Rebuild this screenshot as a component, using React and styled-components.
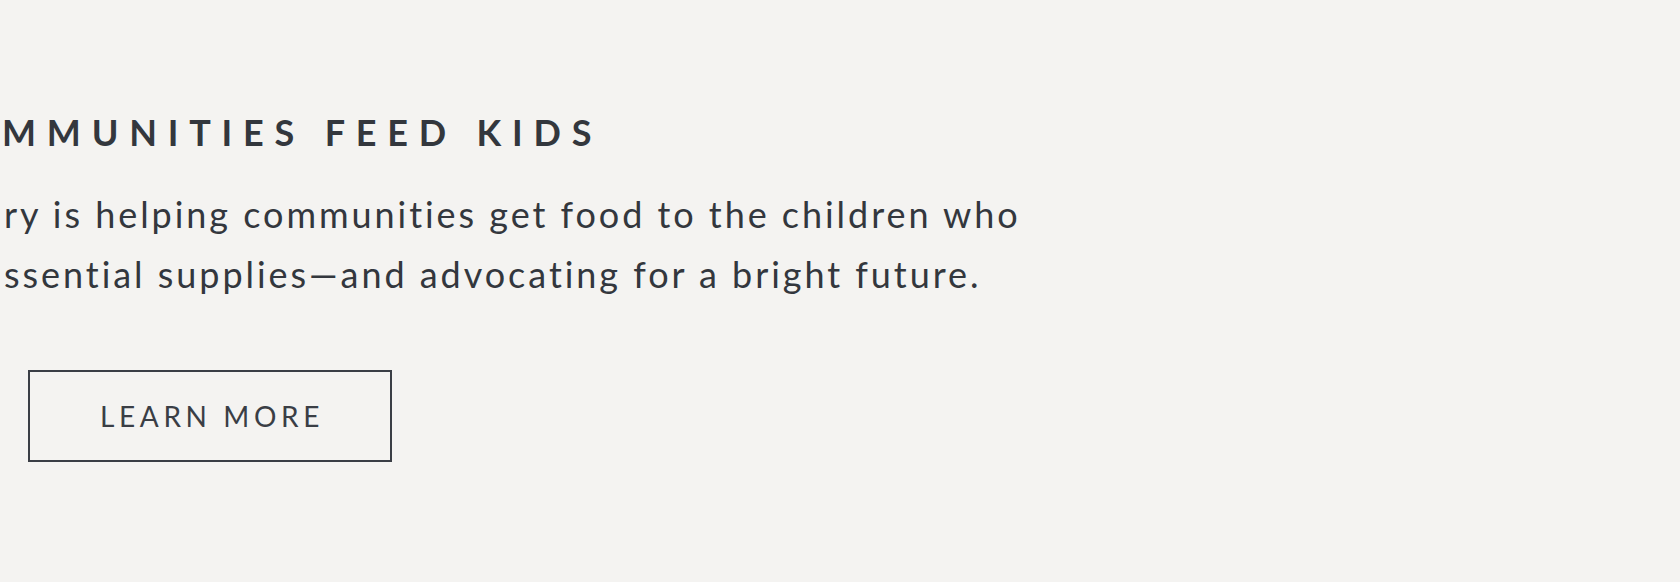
import React from 'react'
import styled, { createGlobalStyle } from 'styled-components'

const GlobalStyle = createGlobalStyle`
  html, body {
    margin: 0;
    padding: 0;
    background: #f4f3f1;
  }
  body {
    font-family: Lato, "Noto Sans", sans-serif;
    color: #33373d;
    overflow: hidden;
  }
`

const Section = styled.section`
  width: 1680px;
  height: 582px;
  overflow: hidden;
  padding-top: 110px;
  box-sizing: border-box;
`

const Column = styled.div`
  display: flex;
  flex-direction: column;
  align-items: flex-start;
  padding-left: 2px;
`

const Heading = styled.h2`
  margin: 0;
  font-size: 36px;
  line-height: 44px;
  font-weight: 700;
  letter-spacing: 0.3em;
  text-transform: uppercase;
  white-space: nowrap;
`

const Body = styled.p`
  margin: 30px 0 0 2px;
  font-size: 36px;
  line-height: 60px;
  font-weight: 400;
  letter-spacing: 0.082em;
  white-space: nowrap;
`

const Button = styled.a`
  display: flex;
  align-items: center;
  justify-content: center;
  box-sizing: border-box;
  width: 364px;
  height: 92px;
  margin: 66px 0 0 26px;
  padding-left: 4px;
  border: 2px solid #3a3e45;
  color: #3a3e45;
  font-size: 28px;
  font-weight: 400;
  letter-spacing: 0.165em;
  text-transform: uppercase;
  text-decoration: none;
  cursor: pointer;
`

const App = () => (
  <>
    <GlobalStyle />
    <Section>
      <Column>
        <Heading>mmunities feed kids</Heading>
        <Body>
          ry is helping communities get food to the children who
          <br />
          ssential supplies—and advocating for a bright future.
        </Body>
        <Button href='#'>Learn more</Button>
      </Column>
    </Section>
  </>
)

export default App
